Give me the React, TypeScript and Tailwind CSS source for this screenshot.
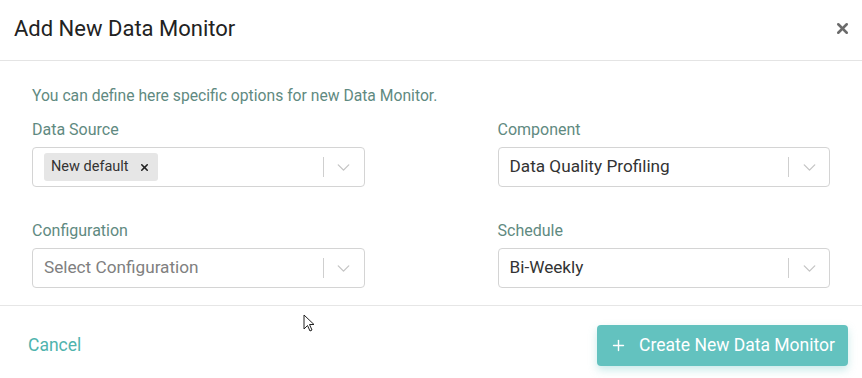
import { ChevronDown, X, Plus } from "lucide-react";

const font = { fontFamily: "Roboto, 'Noto Sans', sans-serif" };

function Select({ children }: { children: React.ReactNode }) {
  return (
    <div className="flex h-[40px] items-center rounded-[4px] border border-[#d4d4d4] bg-white">
      <div className="flex flex-1 items-center pl-[11px]">{children}</div>
      <div className="h-[20px] w-px bg-[#cfcfcf]" />
      <div className="flex w-[40px] items-center justify-center">
        <ChevronDown size={21} strokeWidth={1.5} className="text-[#c4c4c4]" />
      </div>
    </div>
  );
}

function Field({ label, children }: { label: string; children: React.ReactNode }) {
  return (
    <div>
      <div className="mb-[8px] text-[16px] leading-[18px] text-[#5f8a81]">{label}</div>
      <Select>{children}</Select>
    </div>
  );
}

export default function App() {
  return (
    <div className="relative h-[378px] w-[862px] overflow-hidden bg-white" style={font}>
      {/* Header */}
      <div className="flex h-[61px] items-center justify-between border-b border-[#e4e4e4] pb-[4px] pl-[14px] pr-[11px]">
        <h1 className="text-[22px] font-normal text-[#222]">Add New Data Monitor</h1>
        <X size={17} strokeWidth={3.6} className="text-[#6b6b6b]" />
      </div>

      {/* Body */}
      <div className="h-[245px] border-b border-[#e6e6e6] px-[32px] pt-[26px]">
        <p className="mb-[16px] text-[15.7px] leading-[18px] text-[#5f8a81]">
          You can define here specific options for new Data Monitor.
        </p>
        <div className="grid grid-cols-2 gap-x-[133px] gap-y-[35px]">
          <Field label="Data Source">
            <span className="flex h-[28px] items-center rounded-[3px] bg-[#e6e6e6] pl-[7px] pr-[8px] text-[14.5px] text-[#333]">
              New default
              <X size={11} strokeWidth={3.5} className="ml-[10px] text-[#222]" />
            </span>
          </Field>
          <Field label="Component">
            <span className="text-[17.2px] text-[#333]">Data Quality Profiling</span>
          </Field>
          <Field label="Configuration">
            <span className="text-[17.2px] text-[#808080]">Select Configuration</span>
          </Field>
          <Field label="Schedule">
            <span className="text-[17.2px] text-[#333]">Bi-Weekly</span>
          </Field>
        </div>
      </div>

      {/* Footer */}
      <div className="flex h-[72px] items-center justify-between pl-[28px] pr-[14px] pt-[6px]">
        <button className="text-[17.5px] text-[#4fb3ad]">Cancel</button>
        <button className="flex h-[41px] w-[251px] items-center justify-center gap-[12px] rounded-[4px] bg-[#63c2bf] text-[17.5px] text-white shadow-[0_4px_8px_rgba(99,194,191,0.35)]">
          <Plus size={17} strokeWidth={2} />
          Create New Data Monitor
        </button>
      </div>

      {/* Mouse cursor */}
      <svg className="absolute left-[303px] top-[314px]" width="13" height="19" viewBox="0 0 13 19">
        <path d="M1 1 L1 15 L4.5 11.5 L7 17 L9 16 L6.5 10.5 L11 10.5 Z" fill="#fff" stroke="#222" strokeWidth="1" strokeLinejoin="round" />
      </svg>
    </div>
  );
}
